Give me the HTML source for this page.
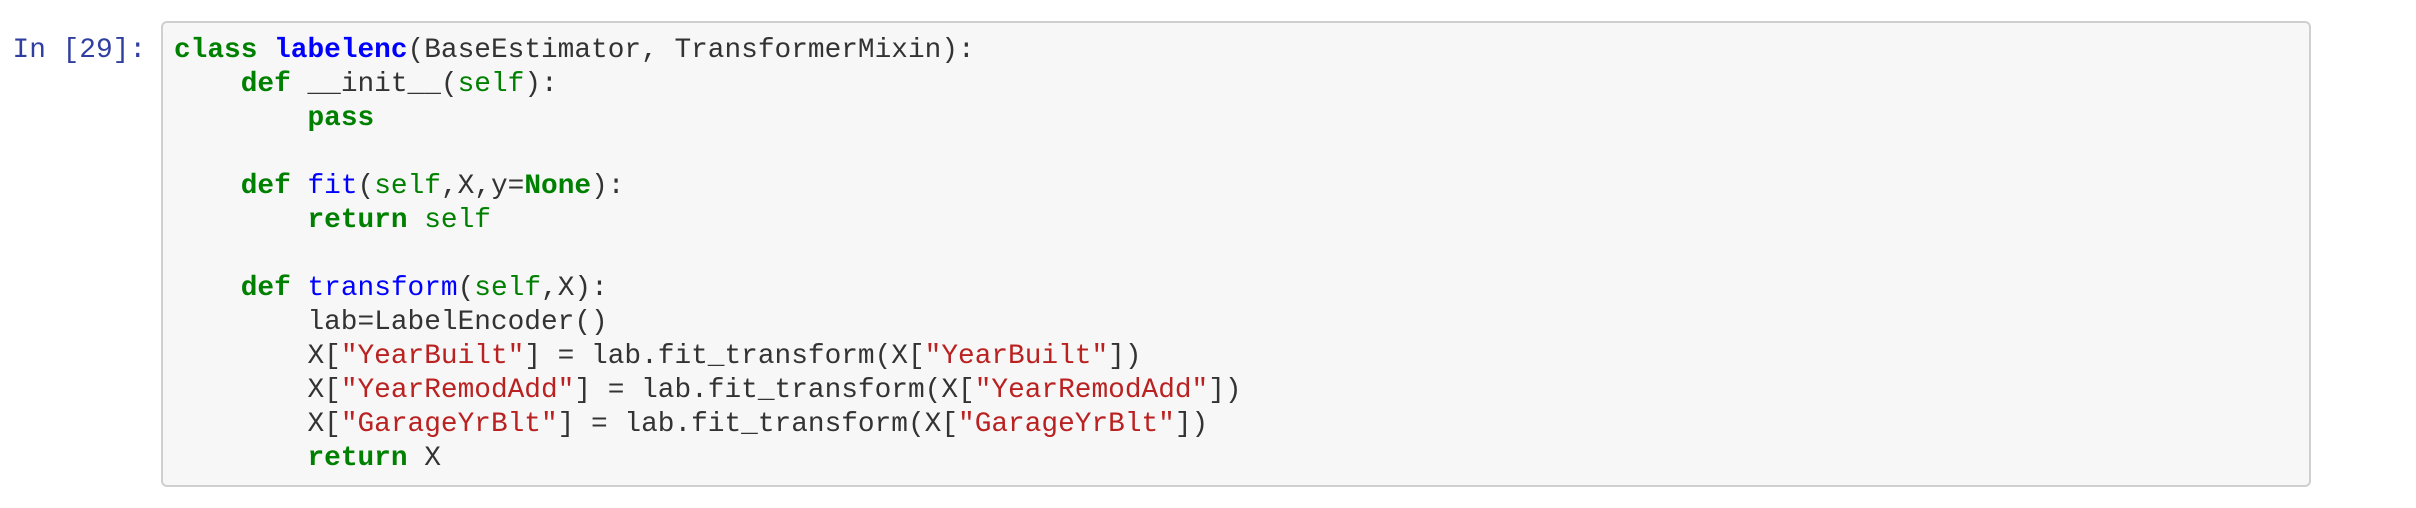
<!DOCTYPE html>
<html><head><meta charset="utf-8"><style>
html,body{margin:0;padding:0;background:#fff;width:2416px;height:508px;overflow:hidden}
.prompt{position:absolute;left:0;top:34px;width:146px;text-align:right;font-family:"Liberation Mono",monospace;font-size:27.8px;line-height:34px;color:#303F9F;white-space:pre}
.box{position:absolute;left:161px;top:21px;width:2146px;height:462px;background:#f7f7f7;border:2px solid #cfcfcf;border-radius:6px;box-sizing:content-box}
pre{position:absolute;left:174px;top:34px;margin:0;font-family:"Liberation Mono",monospace;font-size:27.8px;line-height:34px;color:#333}
.k{color:#008000;font-weight:bold}
.n{color:#0000FF}
.b{color:#008000}
.s{color:#BA2121}
</style></head><body>
<div class="prompt">In [29]:</div>
<div class="box"></div>
<pre><span class="k">class</span> <span class="n" style="font-weight:bold">labelenc</span>(BaseEstimator, TransformerMixin):
    <span class="k">def</span> __init__(<span class="b">self</span>):
        <span class="k">pass</span>

    <span class="k">def</span> <span class="n">fit</span>(<span class="b">self</span>,X,y=<span class="k">None</span>):
        <span class="k">return</span> <span class="b">self</span>

    <span class="k">def</span> <span class="n">transform</span>(<span class="b">self</span>,X):
        lab=LabelEncoder()
        X[<span class="s">"YearBuilt"</span>] = lab.fit_transform(X[<span class="s">"YearBuilt"</span>])
        X[<span class="s">"YearRemodAdd"</span>] = lab.fit_transform(X[<span class="s">"YearRemodAdd"</span>])
        X[<span class="s">"GarageYrBlt"</span>] = lab.fit_transform(X[<span class="s">"GarageYrBlt"</span>])
        <span class="k">return</span> X</pre>
</body></html>
